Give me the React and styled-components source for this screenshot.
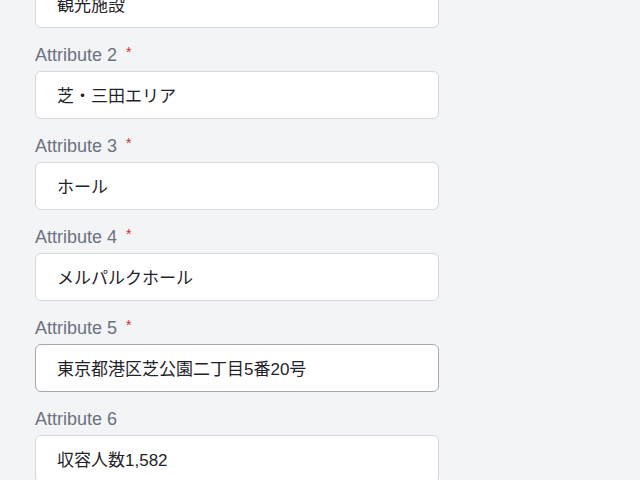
import styled, { createGlobalStyle } from 'styled-components';

const GlobalStyle = createGlobalStyle`
  html, body {
    margin: 0;
    padding: 0;
    background: #f3f4f6;
  }
  body {
    font-family: "Liberation Sans", "Noto Sans CJK JP", sans-serif;
    overflow: hidden;
  }
`

const Form = styled.form`
  display: flex;
  flex-direction: column;
  gap: 16px;
  width: 404px;
  padding: 0 0 0 35px;
  margin-top: -47px;
`

const Field = styled.div`
  display: flex;
  flex-direction: column;
  gap: 3px;
`

const Label = styled.label`
  display: flex;
  align-items: flex-start;
  height: 24px;
  line-height: 22px;
  font-size: 18px;
  color: #6b7280;
`

const Required = styled.span`
  margin-left: 9px;
  font-size: 14px;
  line-height: 16px;
  color: #dc2626;
`

const Input = styled.input`
  box-sizing: border-box;
  width: 100%;
  height: 48px;
  padding: 0 21px 2px;
  border: 1px solid ${p => (p.$active ? '#a4a8ae' : '#d4d7dc')};
  border-radius: 6px;
  background: #ffffff;
  font-family: "Liberation Sans", "Noto Sans CJK JP", sans-serif;
  font-size: 17px;
  color: #1f2329;
  outline: none;
`

const fields = [
  { label: 'Attribute 1', value: '観光施設', required: true },
  { label: 'Attribute 2', value: '芝・三田エリア', required: true },
  { label: 'Attribute 3', value: 'ホール', required: true },
  { label: 'Attribute 4', value: 'メルパルクホール', required: true },
  { label: 'Attribute 5', value: '東京都港区芝公園二丁目5番20号', required: true, active: true },
  { label: 'Attribute 6', value: '収容人数1,582', required: false },
];

const App = () => {
  return (
    <>
      <GlobalStyle />
      <Form>
        {fields.map(f => (
          <Field key={f.label}>
            <Label>
              {f.label}
              {f.required && <Required>*</Required>}
            </Label>
            <Input defaultValue={f.value} $active={f.active} readOnly />
          </Field>
        ))}
      </Form>
    </>
  )
};

export default App;
